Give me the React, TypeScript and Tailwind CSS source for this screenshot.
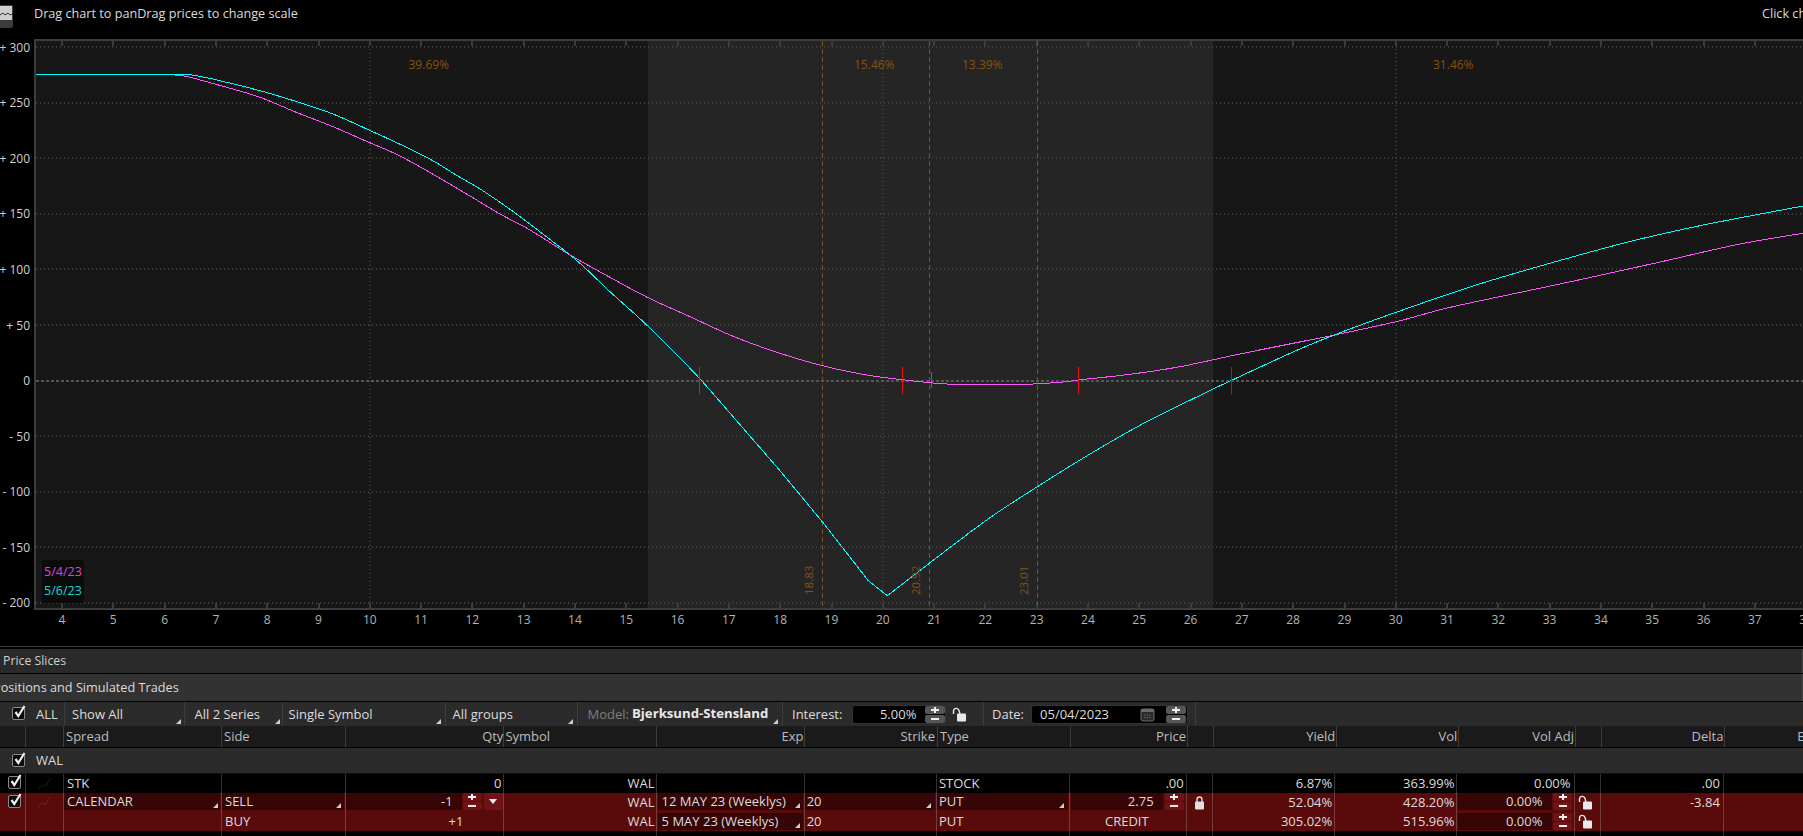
import React from "react";

const P = (x: number) => 62 + (x - 4) * 51.3;

type Pt = [number, number];
const pts = (s: string): Pt[] => s.split(" ").map((p) => p.split(",").map(Number) as Pt);

// Smooth curve through the sampled points (Catmull-Rom converted to cubic Beziers)
function spline(list: Pt[]): string {
  let d = `M${list[0][0]} ${list[0][1]}`;
  for (let i = 0; i < list.length - 1; i++) {
    const p0 = list[Math.max(0, i - 1)];
    const p1 = list[i];
    const p2 = list[i + 1];
    const p3 = list[Math.min(list.length - 1, i + 2)];
    const c1x = p1[0] + (p2[0] - p0[0]) / 6;
    const c1y = p1[1] + (p2[1] - p0[1]) / 6;
    const c2x = p2[0] - (p3[0] - p1[0]) / 6;
    const c2y = p2[1] - (p3[1] - p1[1]) / 6;
    d += ` C${c1x} ${c1y} ${c2x} ${c2y} ${p2[0]} ${p2[1]}`;
  }
  return d;
}

const cyanFlat = "M36 74.5 L189.4 74.5";
const cyanA = spline(pts("189.4,74.5 214,79.3 260,90.7 294.7,101 333,114 367.4,129.3 398,143.3 428.6,158.3 459,176.7 481.7,190 513.3,211.7 555,243.3 580,263.3 610,291.7 646.7,325 690,368.3 709.3,389.3"));
const cyanLine = "M709.3 389.3 L780 470.7 L822.3 521.7 L868.3 580.7 L887.3 595.7 L929.3 563.3";
const cyanB = spline(pts("929.3,563.3 986.7,520 1037.3,486.7 1090,454 1146.7,421.7 1212.7,389.3 1230.8,380.7 1296,350.7 1338.5,333.3 1396,312.3 1469,287.3 1530.8,268.7 1623,243.3 1700,225.7 1803,206"));
const magenta = spline(pts("175.3,75.3 187.5,76.7 222,86 260,97.3 294.7,111.7 333,126.7 367.4,141.7 398,155 428.6,171.7 470,196 500,214 530,230 570,255 610,277.3 648,297.7 690,316.7 730,335 770,350 822.3,365.7 866.7,375 902.3,379.7 930,382.7 953.3,384.3 990,384.6 1026.7,384.3 1060,382.3 1078.3,380 1130,374.3 1180,366.7 1238.5,354.3 1296,342.7 1334.6,335 1396,321.7 1446,308.3 1507.7,295 1584.6,278.7 1661.5,261.7 1738.5,244.3 1803,233.3"));

const yLabels = ["+ 300", "+ 250", "+ 200", "+ 150", "+ 100", "+ 50", "0", "- 50", "- 100", "- 150", "- 200"];
const xLabels = Array.from({ length: 35 }, (_, i) => i + 4);

function Tri({ className }: { className: string }) {
  return (
    <svg className={`absolute ${className}`} width="5" height="5" viewBox="0 0 5 5">
      <polygon points="5,0 5,5 0,5" fill="#cfcfcf" />
    </svg>
  );
}

function Check({ className = "" }: { className?: string }) {
  return (
    <svg className={className} width="15" height="15" viewBox="0 0 15 15">
      <rect x="0.5" y="2.5" width="12" height="12" rx="1.5" fill="#0a0a0a" stroke="#8a8a8a" />
      <path d="M3.5 7 L6.3 11 L12.5 1" fill="none" stroke="#f0f0f0" strokeWidth="2.2" />
    </svg>
  );
}

function Spark({ color }: { color: string }) {
  return (
    <svg width="14" height="12" viewBox="0 0 14 12">
      <path d="M1 11 C3 7 4 6 6 8 C8 10 9 3 13 1" fill="none" stroke={color} strokeWidth="1" />
    </svg>
  );
}

function Spin({ bg, w = "w-[20px]" }: { bg: string; w?: string }) {
  return (
    <div className={`flex flex-col gap-[1px] ${w} shrink-0`}>
      <div className={`h-[8px] ${bg} rounded-[2px] flex items-center justify-center`}>
        <svg width="8" height="6" viewBox="0 0 8 6">
          <path d="M3 0 H5 V2 H8 V4 H5 V6 H3 V4 H0 V2 H3 Z" fill="#eeeeee" />
        </svg>
      </div>
      <div className={`h-[8px] ${bg} rounded-[2px] flex items-center justify-center`}>
        <div className="w-[8px] h-[2px] bg-[#eeeeee]" />
      </div>
    </div>
  );
}

function Lock({ open }: { open?: boolean }) {
  return (
    <svg width="15" height="15" viewBox="0 0 15 15">
      {open ? (
        <path d="M1.5 7 V4 A2.8 2.8 0 0 1 7 3.5 L8 7" fill="none" stroke="#e8e8e8" strokeWidth="1.4" />
      ) : (
        <path d="M3 7 V4.5 A2.5 2.5 0 0 1 8 4.5 V7" fill="none" stroke="#e0e0e0" strokeWidth="1.4" />
      )}
      {open ? (
        <rect x="5" y="6.5" width="9" height="8" rx="1" fill="#e8e8e8" />
      ) : (
        <rect x="1" y="6.5" width="9" height="8" rx="1" fill="#e0e0e0" />
      )}
    </svg>
  );
}

const bodyCols =
  "grid-cols-[7px_19px_38px_158px_123.6px_158.8px_152.2px_148.1px_132.3px_132.6px_117.1px_26px_122.6px_122.2px_117.1px_26px_123.3px_79.1px]";
const headCols =
  "grid-cols-[7px_19px_38px_158px_123.6px_158.8px_153px_148.1px_132.5px_133.5px_116.5px_26.5px_122.8px_122.1px_116.6px_26.5px_122.9px_77.6px]";

function BodyRow({ className, cells }: { className: string; cells: Record<number, React.ReactNode> }) {
  return (
    <div className={`grid ${bodyCols} ${className}`}>
      {Array.from({ length: 18 }, (_, i) => (
        <div key={i} className={`relative h-full min-w-0 ${i > 0 && i < 17 ? "border-r border-white/20" : ""}`}>
          {cells[i]}
        </div>
      ))}
    </div>
  );
}

function T({ right, left, children }: { right?: string; left?: string; children: React.ReactNode }) {
  return (
    <div className={`h-full flex items-center ${right ? "justify-end" : ""} ${right ?? ""} ${left ?? ""} whitespace-nowrap`}>{children}</div>
  );
}

function Dark({ children, className = "" }: { children?: React.ReactNode; className?: string }) {
  return <div className={`relative h-[17px] bg-[#360506] flex items-center whitespace-nowrap ${className}`}>{children}</div>;
}

const headerCells: [string, string][] = [
  ["", ""],
  ["", ""],
  ["", ""],
  ["Spread", "pl-[2px]"],
  ["Side", "pl-[2px]"],
  ["Qty", "justify-end"],
  ["Symbol", "pl-[1px]"],
  ["Exp", "justify-end pr-[1px]"],
  ["Strike", "justify-end pr-[2px]"],
  ["Type", "pl-[2px]"],
  ["Price", "justify-end pr-[1px]"],
  ["", ""],
  ["Yield", "justify-end pr-[1px]"],
  ["Vol", "justify-end pr-[1px]"],
  ["Vol Adj", "justify-end pr-[1px]"],
  ["", ""],
  ["Delta", "justify-end pr-[1px]"],
  ["B", "pl-[72px]"],
];

export default function App() {
  return (
    <div className="w-[1803px] h-[836px] overflow-hidden bg-black text-[13px] leading-none text-[#dcdcdc] font-['Open_Sans',sans-serif]">
      {/* top hint bar */}
      <div className="h-[39px] flex items-start relative">
        <div className="w-[13px] h-[23px] mt-[5px] bg-[#3c3c3c] rounded-br-[2px] shrink-0">
          <svg width="13" height="15" viewBox="0 0 13 15" className="mt-[1px]">
            <rect width="12" height="14" fill="#cfcfcf" />
            <path d="M0 9 L3 7 L5 9 L8 7 L10 9 L12 8" fill="none" stroke="#333" strokeWidth="1" />
          </svg>
        </div>
        <div className="ml-[21px] mt-[6px] h-[14px] flex items-center whitespace-nowrap text-[12.65px]">Drag chart to panDrag prices to change scale</div>
        <div className="ml-auto mt-[6px] h-[14px] flex items-center whitespace-nowrap w-[41px] overflow-hidden text-[12.65px]">Click chart</div>
      </div>

      {/* chart */}
      <div className="flex h-[571px]">
        <div className="w-[34px] shrink-0 -mt-[19px] pr-[4px] text-[12px] text-[#cfcfcf]">
          {yLabels.map((l) => (
            <div key={l} className="h-[55.57px] flex items-center justify-end whitespace-nowrap">
              {l}
            </div>
          ))}
        </div>
        <div className="relative w-[1769px] h-[571px] bg-[#171717] shrink-0">
          <svg width="1769" height="571" viewBox="34 39 1769 571" className="block">
            <rect x="648" y="39" width="565" height="571" fill="#252525" />
            <g shapeRendering="crispEdges">
              {yLabels.map((l, i) =>
                l === "0" ? null : (
                  <line key={l} x1="36" x2="1803" y1={Math.round(47 + i * 55.57)} y2={Math.round(47 + i * 55.57)} stroke="#3f3f3f" strokeWidth="2" strokeDasharray="1 3" />
                ),
              )}
              {[370, 883, 1396].map((x) => (
                <line key={x} x1={x} x2={x} y1="41" y2="608" stroke="#3f3f3f" strokeWidth="2" strokeDasharray="1 3" />
              ))}
              <line x1="36" x2="1803" y1="381" y2="381" stroke="#555555" strokeWidth="2" strokeDasharray="3 2" />

              {xLabels.map((p) => (
                <g key={p}>
                  <rect x={Math.round(P(p)) - 1} y="41" width="2" height="5" fill="#3c3c3c" />
                  <rect x={Math.round(P(p)) - 1} y="603" width="2" height="5" fill="#3c3c3c" />
                </g>
              ))}
              <rect x="34" y="39" width="1769" height="2" fill="#3c3c3c" />
              <rect x="34" y="608" width="1769" height="2" fill="#3c3c3c" />
              <rect x="34" y="39" width="2" height="571" fill="#3c3c3c" />

              {[822.5, 929.5, 1037.5].map((x) => (
                <line key={x} x1={x} x2={x} y1="41" y2="608" stroke="#87540f" strokeWidth="1" strokeDasharray="5 3" />
              ))}
              <line x1="931.5" x2="931.5" y1="372" y2="388" stroke="#87642f" strokeWidth="1" />

              <path d={magenta} fill="none" stroke="#ff55ff" strokeWidth="1" />
              <path d={cyanFlat} fill="none" stroke="#00ffff" strokeWidth="1" />
              <path d={cyanA} fill="none" stroke="#00ffff" strokeWidth="1" />
              <path d={cyanLine} fill="none" stroke="#00ffff" strokeWidth="1" />
              <path d={cyanB} fill="none" stroke="#00ffff" strokeWidth="1" />

              {[699.5, 902.5, 1078.5, 1231.5].map((x) => (
                <line key={x} x1={x} x2={x} y1="367" y2="394" stroke={x === 1231.5 ? "#c60f0f" : "#ee1111"} strokeWidth="1" />
              ))}
            </g>

            <g fill="#85520f" fontSize="12">
              <text x="408.5" y="69">39.69%</text>
              <text x="854" y="69">15.46%</text>
              <text x="962" y="69">13.39%</text>
              <text x="1433" y="69">31.46%</text>
            </g>
            <g fill="#85520f" fontSize="11.5">
              <text transform="translate(813 595) rotate(-90)">18.83</text>
              <text transform="translate(920 595) rotate(-90)">20.92</text>
              <text transform="translate(1028 595) rotate(-90)">23.01</text>
            </g>
          </svg>
          <div className="absolute left-[8px] top-[521px] w-[42px] h-[43px] bg-[#0b0b0b] rounded-[2px] flex flex-col items-center justify-around py-[2px] text-[12.5px]">
            <span className="text-[#dc44dc]">5/4/23</span>
            <span className="text-[#14d8d8]">5/6/23</span>
          </div>
        </div>
      </div>

      {/* x axis labels */}
      <div className="h-[36px] flex pl-[36.35px] text-[12px] text-[#b4b4b4]">
        {xLabels.map((p) => (
          <div key={p} className="w-[51.3px] shrink-0 h-[19px] flex items-center justify-center">
            {p}
          </div>
        ))}
      </div>

      <div className="h-[1px] bg-[#3a3a3a]" />
      <div className="h-[2px]" />

      {/* section bars */}
      <div className="h-[24px] bg-[#2a2a2a] flex items-center pl-[3px] pt-[1px] text-[12.3px] text-[#cfcfcf] border-r border-[#444]">Price Slices</div>
      <div className="h-[1px]" />
      <div className="h-[27px] bg-[#323232] flex items-center text-[12.7px] text-[#dcdcdc] border-r border-[#444] overflow-hidden">
        <span className="-ml-[7px] whitespace-nowrap">Positions and Simulated Trades</span>
      </div>
      <div className="h-[1px]" />

      {/* toolbar */}
      <div className="h-[24px] bg-[#2b2b2b] flex">
        <div className="w-[65px] flex items-center pl-[12px] border-r border-[#3c3c3c]">
          <Check className="-mt-[3px]" />
          <span className="ml-[9px]">ALL</span>
        </div>
        <div className="relative w-[119.5px] flex items-center pl-[7px] border-r border-[#3c3c3c]">
          Show All
          <Tri className="right-[3px] bottom-[2px]" />
        </div>
        <div className="relative w-[98px] flex items-center pl-[10px] border-r border-[#3c3c3c]">
          All 2 Series
          <Tri className="right-[2px] bottom-[2px]" />
        </div>
        <div className="relative w-[163px] flex items-center pl-[6px] border-r border-[#3c3c3c]">
          Single Symbol
          <Tri className="right-[4px] bottom-[2px]" />
        </div>
        <div className="relative w-[132px] flex items-center pl-[7px] border-r border-[#3c3c3c]">
          All groups
          <Tri className="right-[4px] bottom-[2px]" />
        </div>
        <div className="relative w-[205.5px] flex items-center pl-[10px] border-r border-[#3c3c3c] whitespace-nowrap">
          <span className="text-[#7d7d7d]">Model:</span>
          <span className="ml-[3px] font-bold text-[13.2px] text-[#e8e8e8]">Bjerksund-Stensland</span>
          <Tri className="right-[4px] bottom-[2px]" />
        </div>
        <div className="w-[201px] flex items-center pl-[9px] border-r border-[#3c3c3c]">
          <span>Interest:</span>
          <div className="ml-[10px] w-[94px] h-[19px] bg-black border border-[#333] rounded-[3px] flex items-center justify-between">
            <span className="ml-auto pr-[9px]">5.00%</span>
            <Spin bg="bg-[#555]" />
          </div>
          <div className="ml-[6px]">
            <Lock open />
          </div>
        </div>
        <div className="w-[212px] flex items-center pl-[8px] border-r border-[#3c3c3c]">
          <span>Date:</span>
          <div className="ml-[7px] w-[157px] h-[19px] bg-black border border-[#333] rounded-[3px] flex items-center pl-[8px]">
            <span>05/04/2023</span>
            <svg className="ml-auto" width="15" height="15" viewBox="0 0 15 15">
              <rect x="1" y="2" width="13" height="12" rx="2" fill="#2a2a2a" stroke="#6a6a6a" />
              <rect x="1" y="2" width="13" height="3" fill="#6a6a6a" />
              <path d="M4 8 H11 M4 10.5 H11" stroke="#6a6a6a" strokeDasharray="1.5 1" />
            </svg>
            <div className="ml-[11px] mr-[1px]">
              <Spin bg="bg-[#555]" />
            </div>
          </div>
        </div>
      </div>

      {/* table header */}
      <div className={`grid ${headCols} h-[22px] bg-[#1a1a1a] border-b border-black text-[#bdbdbd]`}>
        {headerCells.map(([t, c], i) => (
          <div key={i} className={`flex items-center min-w-0 whitespace-nowrap ${c} ${i > 0 && i < 17 ? "border-r border-[#3c3c3c]" : ""}`}>
            {t}
          </div>
        ))}
      </div>

      {/* WAL group row */}
      <div className="h-[25px] bg-[#2b2b2b] flex items-center pl-[12px]">
        <Check className="-mt-[3px]" />
        <span className="ml-[9px]">WAL</span>
      </div>
      <div className="h-[1px] bg-[#111]" />

      {/* STK */}
      <BodyRow
        className="h-[19px] bg-black"
        cells={{
          1: (
            <div className="h-full flex items-start pl-[0.5px]">
              <Check />
            </div>
          ),
          2: (
            <div className="h-full flex items-center justify-center">
              <Spark color="#242424" />
            </div>
          ),
          3: <T left="pl-[3px]">STK</T>,
          5: <T right="pr-[2px]">0</T>,
          6: <T right="pr-[1px]">WAL</T>,
          9: <T left="pl-[2px]">STOCK</T>,
          10: <T right="pr-[2px]">.00</T>,
          12: <T right="pr-[2px]">6.87%</T>,
          13: <T right="pr-[2px]">363.99%</T>,
          14: <T right="pr-[3px]">0.00%</T>,
          16: <T right="pr-[3px]">.00</T>,
        }}
      />

      {/* CALENDAR */}
      <BodyRow
        className="h-[18px] bg-[#590b0c]"
        cells={{
          1: (
            <div className="h-full flex items-start pl-[0.5px]">
              <Check />
            </div>
          ),
          2: (
            <div className="h-full flex items-center justify-center">
              <Spark color="#762626" />
            </div>
          ),
          3: (
            <Dark className="pl-[3px] mr-[1px]">
              CALENDAR
              <Tri className="right-[2px] bottom-[2px]" />
            </Dark>
          ),
          4: (
            <Dark className="pl-[3px] mr-[1px]">
              SELL
              <Tri className="right-[3px] bottom-[2px]" />
            </Dark>
          ),
          5: (
            <div className="flex h-[17px]">
              <Dark className="w-[116px] justify-end pr-[9px]">-1</Dark>
              <div className="ml-[1px]">
                <Spin bg="bg-[#701317]" w="w-[19px]" />
              </div>
              <div className="ml-[2px] w-[19px] h-[17px] bg-[#701317] rounded-[2px] flex items-center justify-center">
                <svg width="8" height="5" viewBox="0 0 8 5">
                  <polygon points="0,0 8,0 4,5" fill="#eeeeee" />
                </svg>
              </div>
            </div>
          ),
          6: <T right="pr-[1px]">WAL</T>,
          7: (
            <Dark className="pl-[4px] ml-[1px] mr-[1px]">
              12 MAY 23 (Weeklys)
              <Tri className="right-[3px] bottom-[2px]" />
            </Dark>
          ),
          8: (
            <Dark className="pl-[2px] mr-[1px]">
              20
              <Tri className="right-[4px] bottom-[2px]" />
            </Dark>
          ),
          9: (
            <Dark className="pl-[2px] mr-[1px]">
              PUT
              <Tri className="right-[4px] bottom-[2px]" />
            </Dark>
          ),
          10: (
            <div className="flex h-[17px]">
              <Dark className="w-[92px] ml-[1px] justify-end pr-[9px]">2.75</Dark>
              <div className="ml-[2px]">
                <Spin bg="bg-[#701317]" w="w-[19px]" />
              </div>
            </div>
          ),
          11: (
            <div className="h-full flex items-center pl-[7px]">
              <Lock />
            </div>
          ),
          12: <T right="pr-[2px]">52.04%</T>,
          13: <T right="pr-[2px]">428.20%</T>,
          14: (
            <div className="flex h-[17px]">
              <Dark className="w-[94px] ml-[1px] justify-end pr-[10px]">0.00%</Dark>
              <div className="ml-[1px]">
                <Spin bg="bg-[#701317]" w="w-[19px]" />
              </div>
            </div>
          ),
          15: (
            <div className="h-full flex items-center pl-[3px]">
              <Lock open />
            </div>
          ),
          16: <T right="pr-[3px]">-3.84</T>,
        }}
      />

      {/* BUY */}
      <BodyRow
        className="h-[20px] bg-[#590b0c]"
        cells={{
          4: <T left="pl-[3px]">BUY</T>,
          5: <T right="pr-[40px]">+1</T>,
          6: <T right="pr-[1px]">WAL</T>,
          7: (
            <div className="pt-[2px]">
              <Dark className="pl-[4px] ml-[1px] mr-[1px]">
                5 MAY 23 (Weeklys)
                <Tri className="right-[3px] bottom-[2px]" />
              </Dark>
            </div>
          ),
          8: <T left="pl-[2px]">20</T>,
          9: <T left="pl-[2px]">PUT</T>,
          10: <T right="pr-[37px]">CREDIT</T>,
          12: <T right="pr-[2px]">305.02%</T>,
          13: <T right="pr-[2px]">515.96%</T>,
          14: (
            <div className="flex h-[17px] mt-[2px]">
              <Dark className="w-[94px] ml-[1px] justify-end pr-[10px]">0.00%</Dark>
              <div className="ml-[1px]">
                <Spin bg="bg-[#701317]" w="w-[19px]" />
              </div>
            </div>
          ),
          15: (
            <div className="h-full flex items-center pl-[3px]">
              <Lock open />
            </div>
          ),
        }}
      />
      <BodyRow className="h-[5px] bg-black" cells={{}} />
    </div>
  );
}
